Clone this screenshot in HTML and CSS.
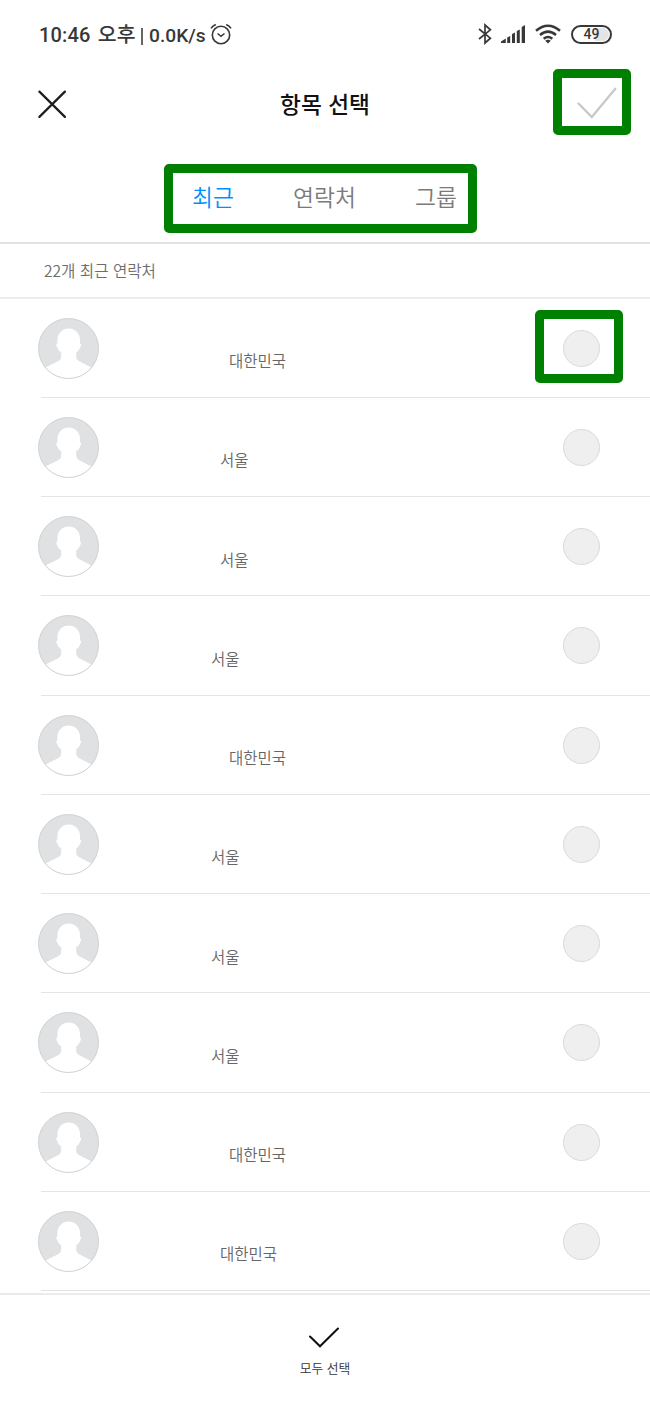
FILE: index.html
```html
<!DOCTYPE html>
<html lang="ko">
<head>
<meta charset="utf-8">
<title>항목 선택</title>
<link rel="stylesheet" href="styles.css">
</head>
<body>
<svg class="defs" aria-hidden="true">
  <symbol id="avatar" viewBox="0 0 61 61">
    <circle cx="30.5" cy="30.5" r="30" fill="#dfe1e3"/>
    <path d="M7.5 49.5 L20.5 43 Q23.2 41.6 23.2 38.7 V34.2 C20.8 32.8 19.8 31 19.3 29.2 C18.2 28.5 17.9 25.9 19.2 25.5 L19.4 25 V21.8 A11.3 11.3 0 0 1 42 21.8 V25 L42.2 25.5 C43.5 25.9 43.2 28.5 42.1 29.2 C41.6 31 40.6 32.8 38.2 34.2 V38.7 Q38.2 41.6 40.8 43 L53.5 49.5 A30 30 0 0 1 7.5 49.5Z" fill="#fff"/>
    <circle cx="30.5" cy="30.5" r="30" fill="none" stroke="#cfd2d3" stroke-width="1"/>
  </symbol>
</svg>
<div class="screen">
  <div class="status">
    <span class="clock">10:46 <span class="ampm">오후</span></span><span class="bar"></span><span class="speed">0.0K/s</span>
    <svg class="alarm" viewBox="0 0 22 22" fill="none" stroke="#383838" stroke-width="1.6"><circle cx="11" cy="12" r="8.7"/><path d="M7.6 10.5L11 13.3L14.5 10.5M1 5.4Q2.7 2.7 5.8 1.5M21 5.4Q19.3 2.7 16.2 1.5"/></svg>
    <div class="tray">
      <svg width="14" height="22" viewBox="0 0 14 22" fill="none" stroke="#383838" stroke-width="1.7"><path d="M1 6L12.4 15.2L7 20V2L12.4 6.8L1 16"/></svg>
      <svg class="signal" width="25" height="18" viewBox="0 0 25 18" fill="#383838"><path d="M0 18V16.5L4.8 13.6V18ZM6.2 18V12.4L9.2 11V18ZM11 18V9L14 7.4V18ZM15.8 18V6L18.8 4.4V18ZM20.7 18V2L24 0V18Z"/></svg>
      <svg class="wifi" width="26" height="20" viewBox="0 0 26 20" fill="none" stroke="#383838" stroke-width="2.5"><path d="M1 6.7Q13 -3.3 25 6.7M5 11Q13 4.2 21 11M8.7 14.8Q13 11.2 17.3 14.8"/><path d="M10.2 16.7Q13 14.8 15.8 16.7L13 19.5Z" fill="#383838" stroke="none"/></svg>
      <span class="battery">49</span>
    </div>
  </div>
  <header class="header">
    <svg class="close" viewBox="0 0 28 28" fill="none" stroke="#1d1d1d" stroke-width="2.2" stroke-linecap="round"><path d="M1.4 1.6L26.9 26.9M26.9 1.6L1.4 26.9"/></svg>
    <h1 class="title">항목 선택</h1>
    <div class="mark mark-confirm"><svg width="40" height="32" viewBox="0 0 40 32" fill="none" stroke="#c8c8c8" stroke-width="2.3" stroke-linecap="round"><path d="M1.5 16.5L14.8 30L38.3 1.8"/></svg></div>
  </header>
  <nav class="mark tabs"><span class="tab active">최근</span><span class="tab">연락처</span><span class="tab">그룹</span></nav>
  <div class="count">22개 최근 연락처</div>
  <main class="list">
    <div class="row"><svg class="avatar"><use href="#avatar"/></svg><span class="place far">대한민국</span><div class="mark mark-select"><i class="radio"></i></div></div>
    <div class="row"><svg class="avatar"><use href="#avatar"/></svg><span class="place mid">서울</span><i class="radio"></i></div>
    <div class="row"><svg class="avatar"><use href="#avatar"/></svg><span class="place mid">서울</span><i class="radio"></i></div>
    <div class="row"><svg class="avatar"><use href="#avatar"/></svg><span class="place">서울</span><i class="radio"></i></div>
    <div class="row"><svg class="avatar"><use href="#avatar"/></svg><span class="place far">대한민국</span><i class="radio"></i></div>
    <div class="row"><svg class="avatar"><use href="#avatar"/></svg><span class="place">서울</span><i class="radio"></i></div>
    <div class="row"><svg class="avatar"><use href="#avatar"/></svg><span class="place">서울</span><i class="radio"></i></div>
    <div class="row"><svg class="avatar"><use href="#avatar"/></svg><span class="place">서울</span><i class="radio"></i></div>
    <div class="row"><svg class="avatar"><use href="#avatar"/></svg><span class="place far">대한민국</span><i class="radio"></i></div>
    <div class="row"><svg class="avatar"><use href="#avatar"/></svg><span class="place mid">대한민국</span><i class="radio"></i></div>
  </main>
  <footer class="footer">
    <svg class="check" width="30" height="21" viewBox="0 0 30 21" fill="none" stroke="#111" stroke-width="2" stroke-linecap="round"><path d="M1 9.5L11 19.3L29 1.5"/></svg>
    <span>모두 선택</span>
  </footer>
</div>
</body>
</html>
```

FILE: styles.css
```css
* { box-sizing: border-box; }
body { margin: 0; background: #fff; font-family: "Noto Sans CJK KR", sans-serif; }
svg { display: block; flex: none; }
.defs { position: absolute; width: 0; height: 0; }
.screen { width: 650px; height: 1408px; display: flex; flex-direction: column; overflow: hidden; }
.status { height: 68px; flex: none; display: flex; align-items: center; padding: 0 38px 0 39px; color: #383838; font: 500 20px/28px Roboto, "Noto Sans CJK KR", sans-serif; }
.clock { width: 97px; white-space: nowrap; margin-top: 2px; letter-spacing: 0.15px; }
.ampm { font-family: "Noto Sans CJK KR", sans-serif; font-size: 20.5px; line-height: 20px; margin-left: 2px; }
.bar { width: 2px; height: 17px; margin: 4px 6px 0 5px; background: #666; }
.speed { width: 57px; margin-top: 3px; white-space: nowrap; font-size: 19.2px; }
.alarm { width: 22px; height: 22px; margin-left: 4px; }
.tray { margin-left: auto; display: flex; align-items: center; }
.signal { margin-left: 9px; }
.wifi { margin-left: 9px; }
.battery { margin-left: 10px; width: 41px; height: 19px; border: 2px solid #383838; border-radius: 10px; background: linear-gradient(90deg, #fff 60%, #e4e4e4 60%); font-size: 14px; font-weight: 500; line-height: 15px; text-align: center; box-shadow: inset 0 0 0 1px #fff; }
.header { height: 96px; flex: none; display: grid; grid-template-columns: 1fr auto 1fr; align-items: start; padding: 0 19px 0 38px; }
.close { width: 28px; height: 28px; margin-top: 22px; }
.title { margin: 19px 0 0; font-size: 22.7px; line-height: 34px; font-weight: 500; color: #111; transform: translateX(-9.5px); }
.mark { border: 9px solid #008000; border-radius: 5px; }
.mark-confirm { justify-self: end; width: 78px; height: 66px; margin-top: 0.6px; padding: 9.5px 0 0 15px; }
.tabs { width: 313px; height: 69px; flex: none; margin-left: 164px; display: flex; padding: 7px 11px 0 19px; justify-content: space-between; font-size: 22.8px; line-height: 34px; font-weight: 350; color: #7a7a7a; }
.tab { white-space: nowrap; }
.active { color: #0090ff; }
.count { height: 56.6px; flex: none; margin-top: 9px; border-top: 2px solid #e1e1e1; border-bottom: 2px solid #ececec; padding: 14px 0 0 44px; font-size: 15.6px; line-height: 24px; font-weight: 350; color: #6d6d6d; }
.list { height: 994.4px; flex: none; display: flex; flex-direction: column; }
.row { height: 99.26px; flex: none; display: flex; align-items: center; padding: 0 50px 0 38px; background: linear-gradient(#e4e4e4, #e4e4e4) 41px 100% / 100% 1px no-repeat; }
.avatar { width: 61px; height: 61px; }
.place { margin: 24px auto 0 112px; font-size: 15.5px; line-height: 24px; font-weight: 350; color: #666; }
.mid { margin-left: 121px; }
.far { margin-left: 130px; }
.radio { display: block; width: 37px; height: 37px; flex: none; border: 1px solid #dadada; border-radius: 50%; background: #efefef; }
.mark-select { width: 88px; height: 73px; flex: none; margin: -3px -23px 0 0; padding: 10.5px 0 0 19px; }
.footer { flex: 1; border-top: 2px solid #ebebeb; display: flex; flex-direction: column; align-items: center; padding-top: 32px; gap: 10px; font-size: 12.8px; line-height: 20px; font-weight: 350; color: #333; }
.check { margin-right: 2px; }
```
